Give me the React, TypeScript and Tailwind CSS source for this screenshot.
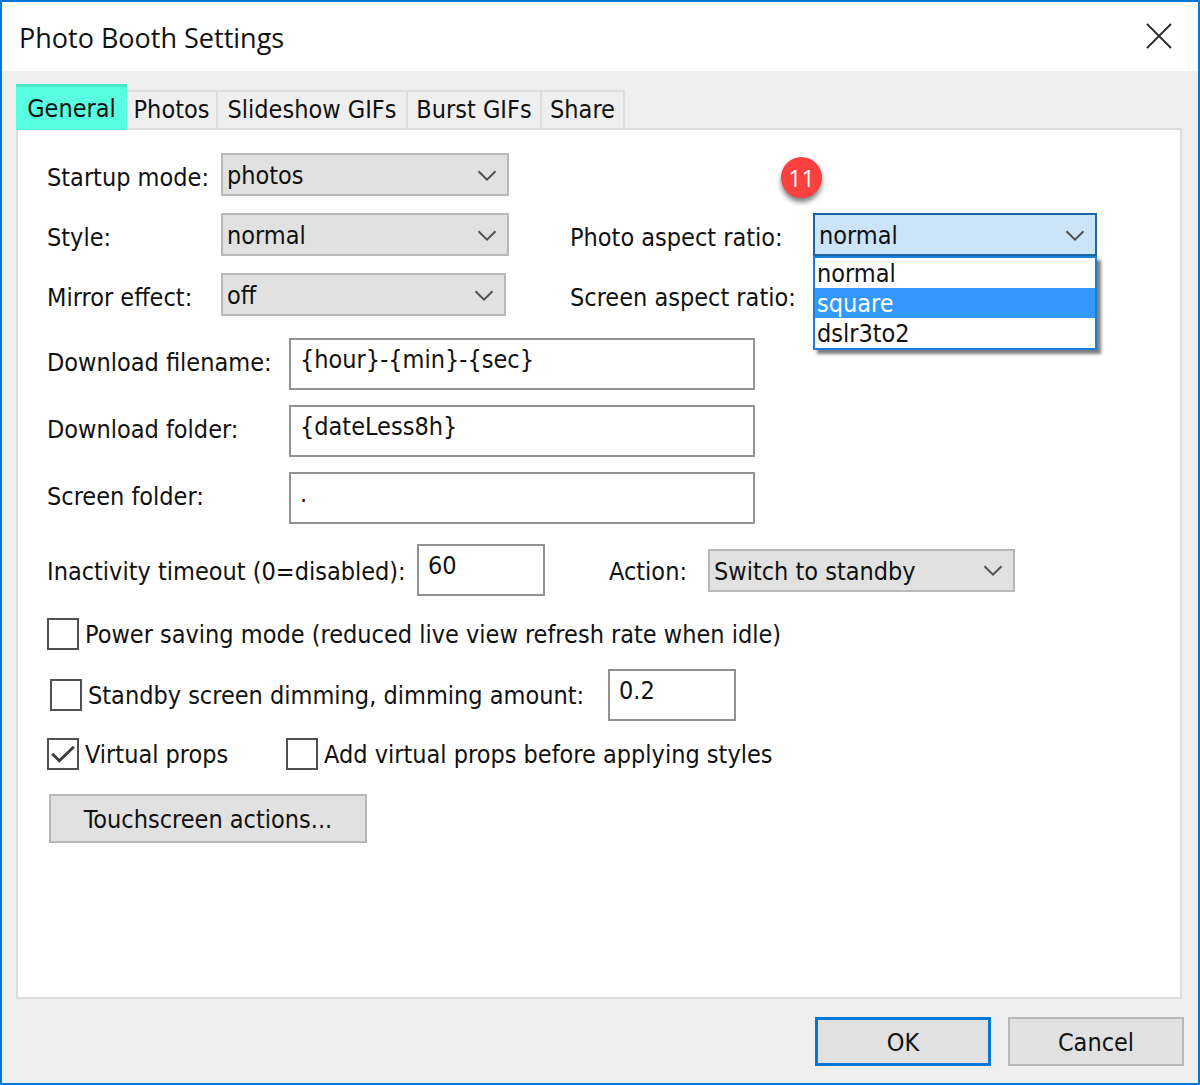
import { useState, type ReactNode } from "react";

function Chevron() {
  return (
    <svg
      className="pointer-events-none absolute top-1/2 right-3 -mt-[5px]"
      width="20"
      height="12"
      viewBox="0 0 20 12"
      fill="none"
      stroke="#505050"
      strokeWidth="2"
      aria-hidden="true"
    >
      <path d="M1.5 1.2 10 9.6 18.5 1.2" />
    </svg>
  );
}

type ComboProps = { id: string; options: string[]; width: string; open?: boolean };

function Combo({ id, options, width, open = false }: ComboProps) {
  return (
    <div className={`relative h-[43px] ${width}`}>
      <select
        id={id}
        defaultValue={options[0]}
        className={`h-full w-full appearance-none border-2 pt-[3px] pr-9 pl-1 outline-none ${
          open ? "border-[#1a67a8] bg-[#cce4f7]" : "border-[#b8b8b8] bg-[#e1e1e1]"
        }`}
      >
        {options.map((o) => (
          <option key={o}>{o}</option>
        ))}
      </select>
      <Chevron />
    </div>
  );
}

function FieldLabel({ htmlFor, children }: { htmlFor: string; children: ReactNode }) {
  return (
    <label htmlFor={htmlFor} className="pt-[6px] whitespace-nowrap">
      {children}
    </label>
  );
}

function TextField({ id, value, width }: { id: string; value: string; width: string }) {
  return (
    <input
      id={id}
      type="text"
      defaultValue={value}
      className={`h-[52px] border-2 border-[#929292] bg-white pb-[10px] pl-[9px] outline-none ${width}`}
    />
  );
}

function CheckField({ id, label, checked = false }: { id: string; label: string; checked?: boolean }) {
  return (
    <div className="flex items-center gap-[6px]">
      <span className="relative size-8">
        <input
          id={id}
          type="checkbox"
          defaultChecked={checked}
          className="peer block size-8 appearance-none border-2 border-[#505050] bg-white"
        />
        <svg
          className="pointer-events-none absolute inset-0 hidden peer-checked:block"
          width="32"
          height="32"
          viewBox="0 0 32 32"
          fill="none"
          stroke="#3a3a3a"
          strokeWidth="2.8"
          aria-hidden="true"
        >
          <path d="M5.2 15.8 12.4 22.8 26.8 8.8" />
        </svg>
      </span>
      <label htmlFor={id} className="pt-[2px] whitespace-nowrap">
        {label}
      </label>
    </div>
  );
}

const tabs = [
  { name: "Photos", width: "w-[91px]" },
  { name: "Slideshow GIFs", width: "w-[190px]" },
  { name: "Burst GIFs", width: "w-[134px]" },
  { name: "Share", width: "w-[83px]" },
];

const ratios = ["normal", "square", "dslr3to2"];

export default function App() {
  const [hovered, setHovered] = useState("square");

  return (
    <div
      role="dialog"
      aria-labelledby="title"
      className="flex min-h-screen flex-col border-2 border-[#0078d7] bg-[#efefef] font-['DejaVu_Sans_Condensed','DejaVu_Sans',sans-serif] text-[25px] leading-[30px] text-[#111]"
    >
      <header className="flex h-[69px] items-center justify-between bg-white pr-[26px] pb-[2px] pl-[17px]">
        <h1 id="title" className="pt-1 font-['Open_Sans',sans-serif] text-[27px]">
          Photo Booth Settings
        </h1>
        <button type="button" aria-label="Close">
          <svg width="26" height="26" viewBox="0 0 26 26" stroke="#2b2b2b" strokeWidth="1.8" aria-hidden="true">
            <path d="M1 1 25 25M25 1 1 25" />
          </svg>
        </button>
      </header>

      <div className="flex flex-1 flex-col px-[14px] pt-[13px]">
        <div role="tablist" className="relative z-10 flex items-start">
          <button
            type="button"
            role="tab"
            aria-selected="true"
            className="-mb-[2px] h-[46px] w-[111px] border-t-[3px] border-[#4ee6c8] bg-[#57fedf]"
          >
            General
          </button>
          {tabs.map((t) => (
            <button
              key={t.name}
              type="button"
              role="tab"
              aria-selected="false"
              className={`mt-[6px] h-[38px] border-t-2 border-r-2 border-[#dcdcdc] whitespace-nowrap ${t.width}`}
            >
              {t.name}
            </button>
          ))}
        </div>

        <main className="mr-[2px] flex-1 border-2 border-[#dcdcdc] bg-white pt-[23px] pr-4 pl-[29px]">
          <div className="grid grid-cols-[174px_349px_243px_284px] items-center gap-y-[17px]">
            <FieldLabel htmlFor="startup">Startup mode:</FieldLabel>
            <Combo id="startup" options={["photos"]} width="w-72" />
            <span className="col-span-2" />

            <FieldLabel htmlFor="style">Style:</FieldLabel>
            <Combo id="style" options={["normal"]} width="w-72" />
            <FieldLabel htmlFor="photo-ratio">Photo aspect ratio:</FieldLabel>
            <div className="relative">
              <Combo id="photo-ratio" options={ratios} width="w-full" open />
              <span className="absolute -top-14 -left-8 flex size-[41px] items-center justify-center rounded-full bg-[#fb4040] font-['Open_Sans',sans-serif] text-[23px] text-white shadow-[0_4px_5px_rgba(0,0,0,0.5)]">
                11
              </span>
              <ul
                role="listbox"
                aria-label="Photo aspect ratio"
                className="absolute inset-x-0 top-full z-10 border-2 border-[#1a7fd8] bg-white shadow-[4px_4px_3px_rgba(0,0,0,0.5)]"
              >
                {ratios.map((o) => (
                  <li
                    key={o}
                    role="option"
                    aria-selected={o === hovered}
                    onMouseEnter={() => setHovered(o)}
                    className={`h-[30px] pl-[2px] leading-8 ${o === hovered ? "bg-[#3399ff] text-white" : ""}`}
                  >
                    {o}
                  </li>
                ))}
              </ul>
            </div>

            <FieldLabel htmlFor="mirror">Mirror effect:</FieldLabel>
            <Combo id="mirror" options={["off"]} width="w-[285px]" />
            <FieldLabel htmlFor="screen-ratio">Screen aspect ratio:</FieldLabel>
            <Combo id="screen-ratio" options={ratios} width="w-full" />
          </div>

          <div className="mt-[22px] grid grid-cols-[242px_466px] items-center gap-y-[15px]">
            <label htmlFor="filename" className="pb-[3px]">Download filename:</label>
            <TextField id="filename" value="{hour}-{min}-{sec}" width="w-full" />
            <label htmlFor="folder" className="pb-[3px]">Download folder:</label>
            <TextField id="folder" value="{dateLess8h}" width="w-full" />
            <label htmlFor="screen-folder" className="pb-[3px]">Screen folder:</label>
            <TextField id="screen-folder" value="." width="w-full" />
          </div>

          <div className="mt-5 grid grid-cols-[370px_192px_99px_307px] items-center">
            <label htmlFor="timeout" className="pt-1 whitespace-nowrap">Inactivity timeout (0=disabled):</label>
            <TextField id="timeout" value="60" width="w-32" />
            <label htmlFor="action" className="pt-1 whitespace-nowrap">Action:</label>
            <Combo id="action" options={["Switch to standby"]} width="w-full" />
          </div>

          <div className="mt-[22px]">
            <CheckField id="power" label="Power saving mode (reduced live view refresh rate when idle)" />
          </div>

          <div className="mt-[19px] ml-[3px] grid grid-cols-[558px_128px] items-center">
            <CheckField id="dimming" label="Standby screen dimming, dimming amount:" />
            <input
              type="text"
              aria-label="Dimming amount"
              defaultValue="0.2"
              className="h-[52px] w-full border-2 border-[#929292] bg-white pb-[10px] pl-[9px] outline-none"
            />
          </div>

          <div className="mt-[17px] grid grid-cols-[239px_auto] justify-start">
            <CheckField id="props" label="Virtual props" checked />
            <CheckField id="add-props" label="Add virtual props before applying styles" />
          </div>

          <button
            type="button"
            className="mt-6 ml-[2px] h-[49px] w-[318px] border-2 border-[#b8b8b8] bg-[#e1e1e1] pt-[2px]"
          >
            Touchscreen actions...
          </button>
        </main>

        <footer className="flex justify-end gap-[17px] pt-[18px] pb-[17px]">
          <button type="button" className="h-[49px] w-44 border-[3px] border-[#0078d7] bg-[#e1e1e1] pt-[2px]">
            OK
          </button>
          <button type="button" className="h-[49px] w-44 border-2 border-[#b8b8b8] bg-[#e1e1e1] pt-[2px]">
            Cancel
          </button>
        </footer>
      </div>
    </div>
  );
}
